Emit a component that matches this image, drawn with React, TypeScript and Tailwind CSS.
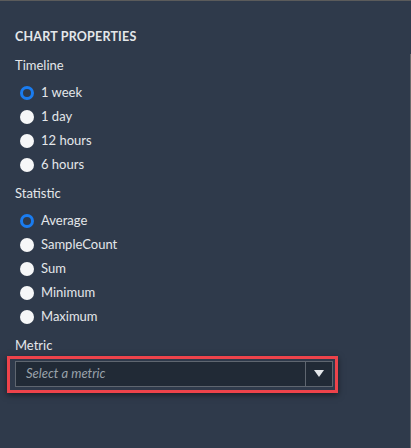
import { useState } from "react";

const timelines = ["1 week", "1 day", "12 hours", "6 hours"];
const statistics = ["Average", "SampleCount", "Sum", "Minimum", "Maximum"];

function Radio({ label, checked, onClick }: { label: string; checked: boolean; onClick: () => void }) {
    return (
        <label className="flex items-center h-6 pl-[5px] cursor-pointer" onClick={onClick}>
            {checked ? (
                <span className="w-[14px] h-[14px] rounded-full border-[3px] border-[#1a7cf0] bg-[#2f3a4b]" />
            ) : (
                <span className="w-[14px] h-[14px] rounded-full bg-[#f6f7f8]" />
            )}
            <span className="ml-[7px] text-[13px] text-[#e4e7ea]">{label}</span>
        </label>
    );
}

export default function App() {
    const [timeline, setTimeline] = useState("1 week");
    const [stat, setStat] = useState("Average");

    return (
        <div className="w-[411px] h-[448px] bg-[#2f3a4b] border-t border-[#5b5b5b] relative font-['Lato',sans-serif] overflow-hidden">
            <div className="absolute right-0 top-[53px] bottom-0 w-px bg-[#6b6b6b]" />
            <div className="px-[15px] pt-[26px]">
                <h2 className="text-[12.5px] font-bold text-[#e4e7ea] leading-5 tracking-[0.2px]">CHART PROPERTIES</h2>
                <div className="mt-[8px] text-[13px] text-[#e4e7ea] leading-5">Timeline</div>
                <div className="mt-[6px] flex flex-col">
                    {timelines.map((t) => (
                        <Radio key={t} label={t} checked={timeline === t} onClick={() => setTimeline(t)} />
                    ))}
                </div>
                <div className="mt-[6px] text-[13px] text-[#e4e7ea] leading-5">Statistic</div>
                <div className="mt-[6px] flex flex-col">
                    {statistics.map((s) => (
                        <Radio key={s} label={s} checked={stat === s} onClick={() => setStat(s)} />
                    ))}
                </div>
                <div className="mt-[6px] text-[13px] text-[#e4e7ea] leading-5">Metric</div>
            </div>
            <div className="ml-[7px] mt-[1px] w-[331px] border-[3px] border-[#ee434b] pl-[5px] pr-[2px] pt-[2px] pb-[3px] shadow-[0_2px_6px_rgba(0,0,0,0.5)]">
                <div className="flex h-[26px] border border-[#5f6670] bg-[#212a36]">
                    <div className="flex-1 flex items-center pl-[10px] text-[13px] italic text-[#9aa2ab]">Select a metric</div>
                    <div className="w-[27px] border-l border-[#5f6670] flex items-center justify-center">
                        <svg width="10" height="8" viewBox="0 0 10 8">
                            <path d="M0 0 L10 0 L5 7 Z" fill="#e4e7ea" />
                        </svg>
                    </div>
                </div>
            </div>
        </div>
    );
}
